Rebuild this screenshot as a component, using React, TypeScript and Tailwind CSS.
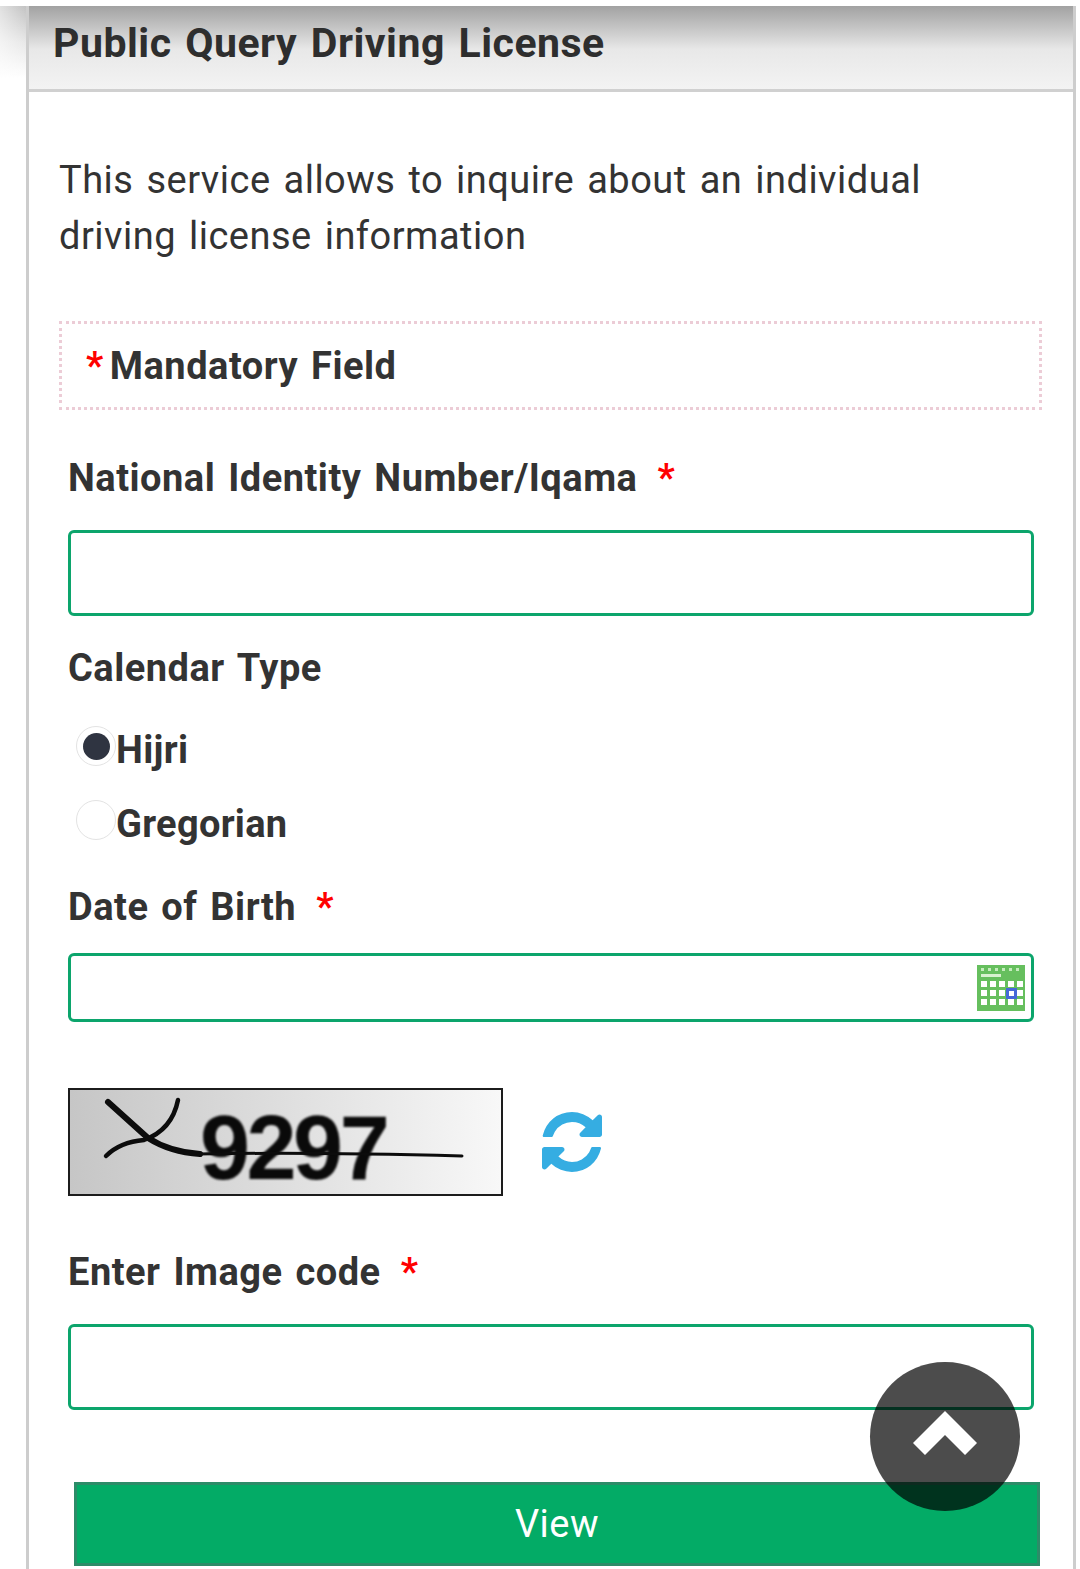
import React from "react";

const REFRESH =
  "M1639 1056q0 5-1 7-64 268-268 434.5t-478 166.5q-146 0-282.5-55t-243.5-157l-129 129q-19 19-45 19t-45-19-19-45v-448q0-26 19-45t45-19h448q26 0 45 19t19 45-19 45l-137 137q71 66 161 102t187 36q134 0 250-65t186-179q11-17 53-117 8-23 30-23h192q13 0 22.5 9.5t9.5 22.5zm25-800v448q0 26-19 45t-45 19h-448q-26 0-45-19t-19-45 19-45l138-138q-148-137-349-137-134 0-250 65t-186 179q-11 17-53 117-8 23-30 23h-199q-13 0-22.5-9.5t-9.5-22.5v-7q65-268 270-434.5t480-166.5q146 0 284 55.5t245 156.5l130-129q19-19 45-19t45 19 19 45z";

function Label({ children, required, className }: { children: React.ReactNode; required?: boolean; className: string }) {
  return (
    <div className={`h-[56px] leading-[56px] text-[38px] font-bold text-[#333] whitespace-nowrap tracking-[0.5px] [word-spacing:3px] ${className}`}>
      {children}
      {required && <span className="text-[#f00] ml-[20px]">*</span>}
    </div>
  );
}

function Field({ h, className, children }: { h: string; className: string; children?: React.ReactNode }) {
  return (
    <div className={`flex items-center justify-end pr-[6px] w-[966px] ${h} border-[3px] border-[#0ca56c] rounded-[6px] bg-white ${className}`}>{children}</div>
  );
}

function Radio({ checked, label, className }: { checked?: boolean; label: string; className: string }) {
  return (
    <div className={`flex items-start h-[56px] pl-[8px] ${className}`}>
      <div className="flex items-center justify-center mt-[4px] w-[40px] h-[40px] rounded-full border border-[#e3e3e3] bg-white shrink-0">
        {checked && <div className="w-[27px] h-[27px] rounded-full bg-[#2f3441]" />}
      </div>
      <span className="text-[38px] font-bold text-[#333] leading-[56px] tracking-[0.3px]">{label}</span>
    </div>
  );
}

function Captcha() {
  return (
    <div className="relative flex items-center mt-[66px] pl-[130px] pt-[12px] w-[435px] h-[108px] border-2 border-[#1c1c1c] bg-gradient-to-r from-[#c6c6c6] to-[#f8f8f8]">
      <span className="font-['Liberation_Sans',sans-serif] font-bold text-[90px] leading-[90px] tracking-[-3.5px] text-[#0a0a0a] blur-[1.2px]">
        9297
      </span>
      <svg className="absolute inset-0 blur-[0.6px]" width="431" height="104" viewBox="0 0 431 104">
        <g fill="none" stroke="#0c0c0c" strokeLinecap="round">
          <path d="M38 12 L78 48 Q100 62 130 64" strokeWidth="6" />
          <path d="M108 10 Q102 40 74 50 Q50 52 36 66" strokeWidth="4.5" />
          <path d="M128 64 Q240 62 392 66" strokeWidth="3" />
        </g>
      </svg>
    </div>
  );
}

function CalendarIcon() {
  const cells = [];
  for (let r = 0; r < 3; r++) {
    for (let c = 0; c < 5; c++) {
      cells.push(<rect key={`${r}-${c}`} x={4 + c * 9} y={16 + r * 9} width="6" height="6" fill="#ffffff" />);
    }
  }
  return (
    <svg className="blur-[0.6px]" width="48" height="46" viewBox="0 0 48 46">
      <rect width="48" height="46" fill="#66bf5e" />
      <rect x="4" y="9" width="20" height="3" fill="#d8f2d0" />
      {[4, 11, 18, 25, 32, 39].map((x) => (
        <rect key={x} x={x} y="3" width="3" height="3" fill="#c5ecbd" />
      ))}
      {cells}
      <rect x="29" y="23" width="11" height="11" fill="#4668d8" />
      <rect x="32" y="26" width="5" height="5" fill="#ffffff" />
    </svg>
  );
}

export default function App() {
  return (
    <div className="relative w-[1080px] h-[1569px] overflow-hidden bg-white font-['Roboto',sans-serif]">
      <div className="absolute left-0 top-[6px] w-[26px] h-[72px] bg-[linear-gradient(to_right,rgba(255,255,255,0.5),transparent),linear-gradient(to_bottom,#c2c2c2,#e8e8e8_50%,#ffffff)]" />
      <div className="ml-[26px] mt-[6px] w-[1050px] h-[1563px] border-x-[3px] border-[#cdcdcd]">
        <div className="h-[86px] border-b-[3px] border-[#d0d0d0] bg-gradient-to-b from-[#a2a2a2] via-[#e8e8e8] via-[52%] to-[#f3f3f3] pl-[24px] text-[41px] leading-[74px] font-bold text-[#2e2e2e] whitespace-nowrap tracking-[0.5px] [word-spacing:3px]">
          Public Query Driving License
        </div>
        <div className="pl-[30px]">
          <p className="pt-[60px] w-[960px] text-[38px] leading-[56px] font-normal text-[#333] tracking-[0.5px] [word-spacing:3px]">
            This service allows to inquire about an individual driving license information
          </p>
          <div className="mt-[57px] w-[983px] h-[89px] pt-[2px] border-[3px] border-dotted border-[#ecccd6] flex items-center gap-[6px] pl-[24px] text-[38px] font-bold text-[#333] tracking-[0.5px] [word-spacing:3px]">
            <span className="text-[#f00]">*</span>
            <span>Mandatory Field</span>
          </div>
          <div className="pl-[9px]">
            <Label required className="mt-[40px]">National Identity Number/Iqama</Label>
            <Field h="h-[86px]" className="mt-[24px]" />
            <Label className="mt-[24px]">Calendar Type</Label>
            <Radio checked label="Hijri" className="mt-[26px]" />
            <Radio label="Gregorian" className="mt-[18px]" />
            <Label required className="mt-[27px]">Date of Birth</Label>
            <Field h="h-[69px]" className="mt-[18px]">
              <CalendarIcon />
            </Field>
            <div className="flex items-start">
              <Captcha />
              <svg className="mt-[90px] ml-[39px]" width="60" height="60" viewBox="128 128 1536 1536" fill="#35ade2">
                <path d={REFRESH} />
              </svg>
            </div>
            <Label required className="mt-[48px]">Enter Image code</Label>
            <Field h="h-[86px]" className="mt-[24px]" />
            <button className="block mt-[72px] ml-[6px] w-[966px] h-[84px] bg-[#03ab66] border-[3px] border-[#2c8c68] text-white text-[38px] font-normal tracking-[0.5px]">
              View
            </button>
          </div>
        </div>
      </div>
      <div className="absolute left-[870px] top-[1362px] w-[150px] h-[149px] rounded-full bg-black/70 flex items-center justify-center">
        <svg width="68" height="46" viewBox="0 0 68 46" className="-mt-[6px]">
          <path d="M34 0 L66 32 L54 44 L34 24 L14 44 L2 32 Z" fill="#ffffff" />
        </svg>
      </div>
    </div>
  );
}
